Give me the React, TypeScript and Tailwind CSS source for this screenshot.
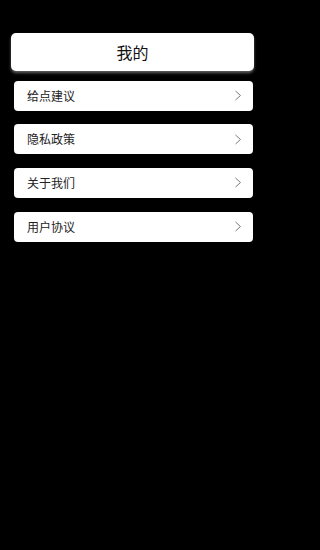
const items = ['给点建议', '隐私政策', '关于我们', '用户协议'];

function Chevron() {
  return (
    <svg width="8" height="11" viewBox="0 0 8 11" fill="none" className="shrink-0">
      <path d="M1.5 1 L6.5 5.5 L1.5 10" stroke="#7a7a7a" strokeWidth="1" />
    </svg>
  );
}

export default function App() {
  return (
    <div
      className="min-h-[550px] w-full bg-black pt-[33px]"
      style={{ fontFamily: '"Noto Sans CJK SC", "Noto Sans", sans-serif' }}
    >
      <header className="ml-[11px] flex h-[38px] w-[243px] items-center justify-center rounded-[5px] bg-white shadow-[0_2px_3px_rgba(160,160,160,0.6)]">
        <h1 className="text-[16px] text-[#111]">我的</h1>
      </header>
      <ul className="ml-[14px] mt-[9.5px] flex w-[239px] flex-col gap-[13.7px]">
        {items.map((label) => (
          <li
            key={label}
            className="flex h-[30px] items-center justify-between rounded-[4px] bg-white pl-[13px] pr-[11px]"
          >
            <span className="text-[12px] text-[#222]">{label}</span>
            <Chevron />
          </li>
        ))}
      </ul>
    </div>
  );
}
